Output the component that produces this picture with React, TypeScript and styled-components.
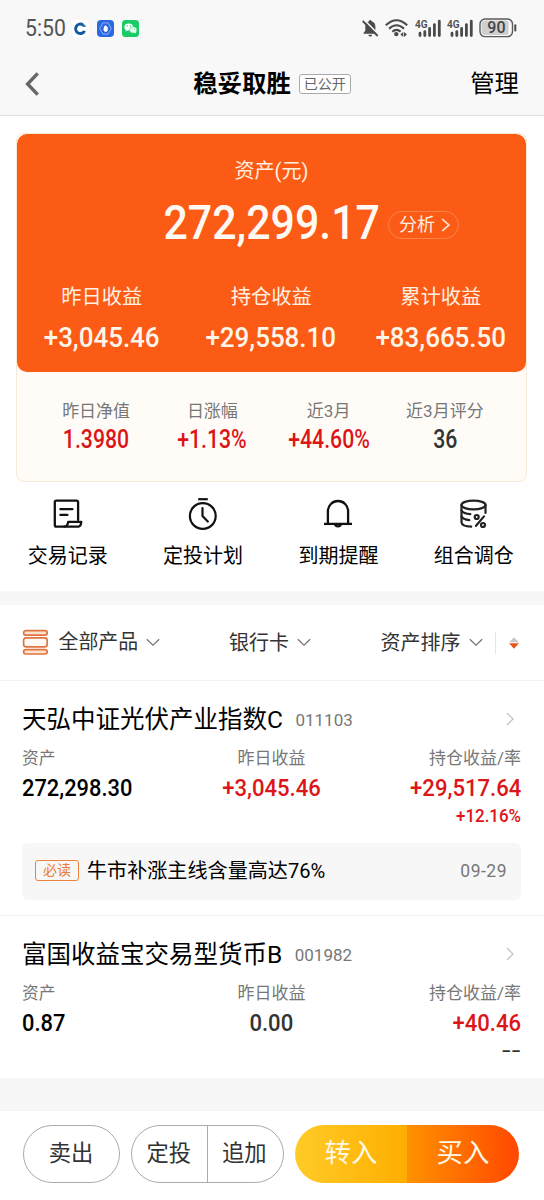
import React from "react";
import styled, { createGlobalStyle } from "styled-components";

const Global = createGlobalStyle`
  * { box-sizing: border-box; }
  body { margin: 0; background: #fff; }
  svg { display: block; flex: none; }
`;

const Page = styled.div`
  width: 544px;
  height: 1200px;
  display: flex;
  flex-direction: column;
  overflow: hidden;
  background: #fff;
  color: #000;
  font-family: Roboto, "Noto Sans CJK SC", sans-serif;
`;

/* Single line of text: every label and heading goes through it */
const Label = styled.div<{ $size: number; $line: number; $color?: string; $weight?: number; $spacing?: number }>`
  font-size: ${(p) => p.$size}px;
  line-height: ${(p) => p.$line}px;
  color: ${(p) => p.$color ?? "#000"};
  font-weight: ${(p) => p.$weight ?? 400};
  letter-spacing: ${(p) => p.$spacing ?? 0}px;
  white-space: nowrap;
`;

/* Condensed figures */
const Figure = styled.div<{ $size: number; $line: number; $narrow: number; $color?: string; $origin?: string; $weight?: number }>`
  width: max-content;
  font-size: ${(p) => p.$size}px;
  line-height: ${(p) => p.$line}px;
  font-weight: ${(p) => p.$weight ?? 500};
  color: ${(p) => p.$color ?? "#000"};
  white-space: nowrap;
  transform: scaleX(${(p) => p.$narrow});
  transform-origin: ${(p) => p.$origin ?? "center"} center;
`;

const StatusBar = styled.div`
  height: 56px;
  padding: 0 27px 0 25px;
  display: flex;
  align-items: center;
  justify-content: space-between;
  background: #f8f8f8;
`;

const StatusGroup = styled.div<{ $gap: number }>`
  display: flex;
  align-items: center;
  gap: ${(p) => p.$gap}px;
`;

const Clock = styled.div`
  width: 39px;
`;

const NavBar = styled.header`
  height: 60px;
  padding: 0 25px 4px 25px;
  display: grid;
  grid-template-columns: 1fr auto 1fr;
  align-items: center;
  background: #f8f8f8;
  border-bottom: 1px solid #dedede;
`;

const NavTitle = styled.div`
  display: flex;
  align-items: center;
  gap: 8px;
`;

const NavAction = styled.div`
  justify-self: end;
`;

const PublicTag = styled.span`
  width: 52px;
  height: 20px;
  border: 1px solid #aaa;
  border-radius: 3px;
  background: #fff;
  color: #666;
  font-size: 14px;
  line-height: 18px;
  text-align: center;
  white-space: nowrap;
`;

const SummaryCard = styled.section`
  height: 349px;
  flex: none;
  margin: 17px 17px 0 16px;
  border: 1px solid #f6ead6;
  border-radius: 8px;
  background: #fffcf7;
`;

const AssetPanel = styled.div`
  height: 238px;
  border-radius: 10px;
  background: #fb5b15;
  padding-top: 23px;
  display: flex;
  flex-direction: column;
  align-items: center;
`;

const TotalRow = styled.div`
  align-self: stretch;
  height: 60px;
  margin-top: 8px;
  display: grid;
  grid-template-columns: 1fr auto 1fr;
  align-items: center;
`;

const TotalSlot = styled.div`
  grid-column: 2;
  width: 217px;
  display: flex;
  justify-content: center;
`;

const AnalyseButton = styled.div`
  width: 71px;
  height: 28px;
  margin: 3px 0 0 8px;
  padding: 0 8px 0 10px;
  border: 1px solid #fc824c;
  border-radius: 14px;
  display: flex;
  align-items: center;
  justify-content: space-between;
`;

const GainRow = styled.div`
  width: 509px;
  margin-top: 29px;
  display: grid;
  grid-template-columns: repeat(3, 169.5px);
`;

const Stack = styled.div<{ $align?: string; $gap?: number }>`
  display: flex;
  flex-direction: column;
  align-items: ${(p) => p.$align ?? "center"};
  gap: ${(p) => p.$gap ?? 0}px;
`;

const StatRow = styled.div`
  padding: 26px 23px 0 21px;
  display: grid;
  grid-template-columns: repeat(4, 1fr);
`;

const Shortcuts = styled.nav`
  height: 109px;
  flex: none;
  padding-top: 15px;
  display: grid;
  grid-template-columns: repeat(4, 135.4px);
`;

const Band = styled.div<{ $height: number }>`
  height: ${(p) => p.$height}px;
  flex: none;
  background: #f7f7f7;
`;

const FilterBar = styled.div`
  height: 76px;
  flex: none;
  padding: 0 24px 0 22px;
  display: flex;
  align-items: center;
  border-bottom: 1px solid #f3f3f3;
`;

const Filter = styled.div<{ $before?: number }>`
  margin-left: ${(p) => p.$before ?? 0}px;
  display: flex;
  align-items: center;
  gap: 8px;
`;

const SortToggle = styled.div`
  height: 22px;
  margin-left: 12px;
  padding-left: 13px;
  border-left: 1px solid #e5e5e5;
  display: flex;
  align-items: center;
`;

const Fund = styled.article<{ $height: number; $divided?: boolean }>`
  height: ${(p) => p.$height}px;
  flex: none;
  padding: 21px 23px 0 22px;
  border-bottom: ${(p) => (p.$divided ? "1px solid #f1f1f1" : "none")};
`;

const FundHead = styled.div`
  height: 36px;
  padding-right: 7px;
  display: flex;
  align-items: center;
  gap: 12.5px;
  svg { margin: 0 0 2px auto; }
`;

const FundColumns = styled.div`
  margin-top: 7px;
  display: grid;
  grid-template-columns: 1fr auto 1fr;
`;

const Notice = styled.div`
  height: 57px;
  margin-top: 16px;
  padding: 0 14px 2px 13px;
  border-radius: 6px;
  background: #f7f7f7;
  display: flex;
  align-items: center;
`;

const MustRead = styled.span`
  width: 44px;
  height: 21px;
  margin-right: 8px;
  border: 1px solid #ee8340;
  border-radius: 3px;
  color: #ec7b35;
  font-size: 14px;
  line-height: 19px;
  text-align: center;
`;

const NoticeDate = styled.div`
  margin-left: auto;
`;

const ActionBar = styled.footer`
  height: 90px;
  flex: none;
  padding: 14px 24px 0 23px;
  border-top: 1px solid #f1f1f1;
  display: flex;
`;

const OutlineGroup = styled.div<{ $width: number }>`
  width: ${(p) => p.$width}px;
  height: 58px;
  flex: none;
  margin-right: 11px;
  border: 1px solid #aaa;
  border-radius: 29px;
  display: flex;
`;

const OutlineButton = styled.div`
  flex: 1;
  padding-right: 1px;
  font-size: 22.3px;
  line-height: 55px;
  text-align: center;
  color: #333;
  & + & { border-left: 1px solid #aaa; padding-right: 2px; }
`;

const SolidGroup = styled.div`
  width: 224px;
  height: 58px;
  flex: none;
  border-radius: 29px;
  overflow: hidden;
  display: flex;
`;

const SolidButton = styled.div<{ $from: string; $to: string }>`
  flex: 1;
  background: linear-gradient(90deg, ${(p) => p.$from}, ${(p) => p.$to});
  color: #fff8e6;
  font-size: 26.4px;
  line-height: 57px;
  text-align: center;
`;

const BankIcon = () => (
  <svg width="17" height="17" viewBox="0 0 17 17">
    <rect width="17" height="17" rx="4" fill="#fff" />
    <path d="M11 4.9A4.7 4.7 0 1 0 12.6 10.8" fill="none" stroke="#125a9c" strokeWidth="2.9" />
    <path d="M9.4 3.2Q12.6 3.4 14.2 6.8H10.6" fill="#125a9c" />
    <path d="M8.3 6 11.1 8.9 8.3 11.7 5.5 8.9Z" fill="#fff" />
    <path d="M10.6 3.3 13.6 6" stroke="#fff" strokeWidth=".5" />
  </svg>
);

const HandIcon = () => (
  <svg width="17" height="17" viewBox="0 0 17 17">
    <rect width="17" height="17" rx="4" fill="#2b67df" />
    <path d="M5.8 2.9h5.4l3.1 5.6-3.1 5.6H5.8L2.7 8.5Z" fill="none" stroke="#a4c1fb" strokeWidth=".8" />
    <path d="M6.1 8.9 6.9 8.4V6.3h1V5.6h1v.5h1v.8h.8v3.6l-.9 1.2H7.6Z" fill="#fff" />
  </svg>
);

const ChatIcon = () => (
  <svg width="17" height="17" viewBox="0 0 17 17">
    <rect width="17" height="17" rx="3.5" fill="#18cd67" />
    <ellipse cx="6.7" cy="7" rx="4.3" ry="3.6" fill="#fff" />
    <path d="M4 9.2 3.6 11.6l2.6-1.5Z" fill="#fff" />
    <ellipse cx="11.2" cy="9.9" rx="3.7" ry="3.1" fill="#f2fff7" stroke="#18cd67" strokeWidth=".5" />
    <path d="m12.2 12.4 1.8 1-.2-2Z" fill="#fff" />
    <g fill="#18cd67"><circle cx="5.2" cy="6" r=".65" /><circle cx="8.3" cy="6" r=".65" /><circle cx="10" cy="9.1" r=".5" /><circle cx="12.5" cy="9.1" r=".5" /></g>
  </svg>
);

const MutedIcon = () => (
  <svg width="17" height="19" viewBox="0 0 17 19">
    <path d="M8.3 1.1c.8 0 1.2.6 1.2 1.2 2.7.8 3.9 2.8 3.9 5.2v4.2l1.8 2.2v.8H1.5v-.8l1.8-2.2V7.5c0-2.4 1.2-4.4 3.8-5.2 0-.6.4-1.2 1.2-1.2ZM6.4 15.7h3.8c0 1.1-.8 1.9-1.9 1.9s-1.9-.8-1.9-1.9Z" fill="#4b4b4b" />
    <path d="M2.6 1.4 16.8 15.8" stroke="#f8f8f8" strokeWidth="1.6" />
    <path d="m.7 2 15 15" stroke="#4b4b4b" strokeWidth="1.8" />
  </svg>
);

const WifiIcon = () => (
  <svg width="23" height="18" viewBox="0 0 23 18">
    <g fill="none" stroke="#4b4b4b" strokeWidth="2.1">
      <path d="M.8 6.3Q11.5-3.8 22.2 6.3" />
      <path d="M4 9.7Q11.5 2.8 19 9.7" />
      <path d="M7.3 12.6Q11.5 9 15.7 12.6" />
    </g>
    <circle cx="11.3" cy="15.1" r="2.2" fill="#4b4b4b" />
    <path d="m15.3 15.5 3-2.6v5.1Zm6.7 0L19 12.9V18Z" fill="#4b4b4b" />
  </svg>
);

const SignalIcon = () => (
  <svg width="26" height="29" viewBox="0 -5 26 29">
    <text x="0" y="9.4" fontFamily="Roboto" fontSize="11.8" fontWeight="600" fill="#4b4b4b" textLength="12.6" lengthAdjust="spacingAndGlyphs">4G</text>
    <g stroke="#4b4b4b" strokeWidth="2.8" strokeLinecap="round">
      <path d="M5 16.6v-2.4M9.8 16.6v-3.9M14.6 16.6V9.4M19.4 16.6V5.6M24.3 16.6V2.2" />
    </g>
  </svg>
);

const BatteryIcon = () => (
  <svg width="38" height="20" viewBox="0 0 38 20">
    <rect x="1" y="1" width="32.5" height="17.6" rx="5" fill="#f8f8f8" stroke="#5a5a5a" strokeWidth="1.4" />
    <rect x="2.6" y="2.6" width="27" height="14.4" rx="3" fill="#cfcfcf" />
    <path d="M36.3 7.2v5.2" stroke="#4b4b4b" strokeWidth="2" strokeLinecap="round" />
    <text x="8.3" y="15.4" fontFamily="Roboto" fontSize="16" fontWeight="500" fill="#444">90</text>
  </svg>
);

const BackIcon = () => (
  <svg width="15" height="26" viewBox="0 0 15 26">
    <path d="M12.7 2.4 2.6 13l10.1 10.6" fill="none" stroke="#666" strokeWidth="3.4" />
  </svg>
);

const Arrow = ({ color, width, height, stroke }: { color: string; width: number; height: number; stroke: number }) => (
  <svg width={width} height={height} viewBox="0 0 8 14" preserveAspectRatio="none">
    <path d="m1 1 6 6-6 6" fill="none" stroke={color} strokeWidth={stroke} />
  </svg>
);

const Caret = () => (
  <svg width="14" height="9" viewBox="0 0 14 9">
    <path d="m.8 1.2 6.2 6 6.2-6" fill="none" stroke="#777" strokeWidth="1.3" />
  </svg>
);

const RecordIcon = () => (
  <svg width="32" height="34" viewBox="0 0 32 34">
    <g fill="none" stroke="#111" strokeWidth="2.3" strokeLinejoin="round" strokeLinecap="round">
      <path d="M26.1 23V5.2a1.5 1.5 0 0 0-1.5-1.5H4.3a1.5 1.5 0 0 0-1.5 1.5V28A1.7 1.7 0 0 0 4.5 29.7H12.6" />
      <path d="M12.6 29.7q3-.6 3.6-4.9h13.1q-.6 4.9-3.4 4.9H12.6" />
      <path d="M8.4 12.2h12M8.4 17.9h7" />
    </g>
  </svg>
);

const TimerIcon = () => (
  <svg width="32" height="34" viewBox="0 0 32 34">
    <g fill="none" stroke="#111" strokeWidth="2.2" strokeLinecap="round" strokeLinejoin="round">
      <path d="M11.2 2.2h9.6" strokeLinecap="butt" />
      <circle cx="15.8" cy="19" r="12.9" />
      <path d="M15.5 11v8l5.3 5.5" />
    </g>
  </svg>
);

const BellIcon = () => (
  <svg width="32" height="34" viewBox="0 0 32 34">
    <g fill="none" stroke="#111" strokeWidth="2.3">
      <path d="M5.9 26.5V14.1a10.1 10.1 0 0 1 20.2 0v12.4" />
      <path d="M2 26.9h28" />
      <path d="M13 27.3a3.1 2.9 0 0 0 6 0" />
    </g>
  </svg>
);

const CoinsIcon = () => (
  <svg width="32" height="34" viewBox="0 0 32 34">
    <g fill="none" stroke="#222" strokeWidth="2.2" strokeLinecap="round">
      <ellipse cx="15.5" cy="8" rx="12" ry="4.4" />
      <path d="M3.5 8v17.3q.5 4 9.7 4.4M27.5 8v8" />
      <path d="M3.5 13.7q2 3 8.8 3.5M3.5 19.5q1.5 3 7.8 3.6" />
      <path d="M26 19.4 18 28.8" />
      <circle cx="18.7" cy="20" r="2" />
      <circle cx="25" cy="28" r="2" />
    </g>
  </svg>
);

const ProductIcon = () => (
  <svg width="28.5" height="27" viewBox="0 0 28.5 27">
    <g fill="#fde3cf" stroke="#e07440" strokeWidth="1.7">
      <rect x="1.6" y="1.7" width="23.6" height="4.4" rx="2.2" />
      <rect x="1.6" y="8.8" width="23.6" height="9" rx="2.5" fill="#fffaf6" />
      <rect x="1.6" y="20.6" width="23.6" height="4.4" rx="2.2" />
    </g>
  </svg>
);

const SortIcon = () => (
  <svg width="10" height="12" viewBox="0 0 10 12">
    <path d="M.1 5.3 5 .2l4.9 5.1Z" fill="#c9c9c9" />
    <path d="M.1 6.3h9.8L5 11.7Z" fill="#e8541c" />
  </svg>
);

const RED = "#dc1519";
const GREY = "#777";

const gains = [
  { label: "昨日收益", value: "+3,045.46" },
  { label: "持仓收益", value: "+29,558.10" },
  { label: "累计收益", value: "+83,665.50" },
];

const stats = [
  { label: "昨日净值", value: "1.3980", color: RED },
  { label: "日涨幅", value: "+1.13%", color: RED },
  { label: "近3月", value: "+44.60%", color: RED },
  { label: "近3月评分", value: "36", color: "#333" },
];

const shortcuts = [
  { label: "交易记录", icon: <RecordIcon /> },
  { label: "定投计划", icon: <TimerIcon /> },
  { label: "到期提醒", icon: <BellIcon /> },
  { label: "组合调仓", icon: <CoinsIcon /> },
];

interface FundData {
  name: string;
  code: string;
  asset: string;
  day: string;
  dayColor: string;
  hold: string;
  rate: string;
  rateColor: string;
  rateScale: number;
}

const FundSummary = ({ fund }: { fund: FundData }) => (
  <>
    <FundHead>
      <Label $size={24.5} $line={36}>{fund.name}</Label>
      <Label $size={17} $line={36} $color={GREY}>{fund.code}</Label>
      <Arrow color="#c4c4c4" width={8} height={14} stroke={1.3} />
    </FundHead>
    <FundColumns>
      <Stack $align="flex-start">
        <Label $size={16.7} $line={27} $color={GREY}>资产</Label>
        <Figure $size={23.5} $line={32} $narrow={0.93} $origin="left">{fund.asset}</Figure>
      </Stack>
      <Stack>
        <Label $size={17} $line={26} $color={GREY}>昨日收益</Label>
        <Figure $size={23.5} $line={34} $narrow={0.94} $color={fund.dayColor}>{fund.day}</Figure>
      </Stack>
      <Stack $align="flex-end">
        <Label $size={17} $line={26} $color={GREY}>持仓收益/率</Label>
        <Figure $size={23.5} $line={34} $narrow={0.94} $origin="right" $color={RED}>{fund.hold}</Figure>
        <Figure $size={19} $line={22} $narrow={fund.rateScale} $origin="right" $color={fund.rateColor}>{fund.rate}</Figure>
      </Stack>
    </FundColumns>
  </>
);

export default function App() {
  return (
    <Page>
      <Global />
      <StatusBar>
        <StatusGroup $gap={8}>
          <Clock>
            <Figure $size={23.5} $line={30} $narrow={0.9} $origin="left" $color="#555" $weight={400}>5:50</Figure>
          </Clock>
          <BankIcon />
          <HandIcon />
          <ChatIcon />
        </StatusGroup>
        <StatusGroup $gap={6.25}>
          <MutedIcon />
          <WifiIcon />
          <SignalIcon />
          <SignalIcon />
          <BatteryIcon />
        </StatusGroup>
      </StatusBar>
      <NavBar>
        <BackIcon />
        <NavTitle>
          <Label $size={24.4} $line={36} $weight={700}>稳妥取胜</Label>
          <PublicTag>已公开</PublicTag>
        </NavTitle>
        <NavAction>
          <Label $size={24.4} $line={36}>管理</Label>
        </NavAction>
      </NavBar>

      <SummaryCard>
        <AssetPanel>
          <Label $size={20} $line={28} $color="#fff0e2">资产(元)</Label>
          <TotalRow>
            <TotalSlot>
              <Figure $size={49} $line={60} $narrow={0.875} $color="#fffaf3">272,299.17</Figure>
            </TotalSlot>
            <AnalyseButton>
              <Label $size={18} $line={26} $color="#fff0e2">分析</Label>
              <Arrow color="#ffe3cf" width={9} height={14} stroke={1.6} />
            </AnalyseButton>
          </TotalRow>
          <GainRow>
            {gains.map((g) => (
              <Stack key={g.label} $gap={6}>
                <Label $size={20.3} $line={30} $color="#fff0e2">{g.label}</Label>
                <Figure $size={28.5} $line={40} $narrow={0.91} $color="#fff6ea">{g.value}</Figure>
              </Stack>
            ))}
          </GainRow>
        </AssetPanel>
        <StatRow>
          {stats.map((s) => (
            <Stack key={s.label}>
              <Label $size={17} $line={26} $color={GREY}>{s.label}</Label>
              <Figure $size={25} $line={32} $narrow={0.85} $color={s.color}>{s.value}</Figure>
            </Stack>
          ))}
        </StatRow>
      </SummaryCard>

      <Shortcuts>
        {shortcuts.map((s) => (
          <Stack key={s.label} $gap={10}>
            {s.icon}
            <Label $size={20} $line={30}>{s.label}</Label>
          </Stack>
        ))}
      </Shortcuts>

      <Band $height={14} />

      <FilterBar>
        <Filter>
          <ProductIcon />
          <Label $size={19.9} $line={30} $color="#333">全部产品</Label>
          <Caret />
        </Filter>
        <Filter $before={69}>
          <Label $size={20} $line={30} $color="#333">银行卡</Label>
          <Caret />
        </Filter>
        <Filter $before={69.5}>
          <Label $size={20} $line={30} $color="#333">资产排序</Label>
          <Caret />
        </Filter>
        <SortToggle>
          <SortIcon />
        </SortToggle>
      </FilterBar>

      <Fund $height={235} $divided>
        <FundSummary
          fund={{ name: "天弘中证光伏产业指数C", code: "011103", asset: "272,298.30", day: "+3,045.46", dayColor: RED, hold: "+29,517.64", rate: "+12.16%", rateColor: RED, rateScale: 0.89 }}
        />
        <Notice>
          <MustRead>必读</MustRead>
          <Label $size={20.1} $line={30}>牛市补涨主线含量高达76%</Label>
          <NoticeDate>
            <Label $size={17.5} $line={30} $color={GREY} $spacing={0.5}>09-29</Label>
          </NoticeDate>
        </Notice>
      </Fund>

      <Fund $height={162}>
        <FundSummary
          fund={{ name: "富国收益宝交易型货币B", code: "001982", asset: "0.87", day: "0.00", dayColor: "#333", hold: "+40.46", rate: "--", rateColor: "#333", rateScale: 1.5 }}
        />
      </Fund>

      <Band $height={32} />

      <ActionBar>
        <OutlineGroup $width={97}>
          <OutlineButton>卖出</OutlineButton>
        </OutlineGroup>
        <OutlineGroup $width={153}>
          <OutlineButton>定投</OutlineButton>
          <OutlineButton>追加</OutlineButton>
        </OutlineGroup>
        <SolidGroup>
          <SolidButton $from="#ffcb27" $to="#ffae00">转入</SolidButton>
          <SolidButton $from="#ff9100" $to="#ff4800">买入</SolidButton>
        </SolidGroup>
      </ActionBar>
    </Page>
  );
}
